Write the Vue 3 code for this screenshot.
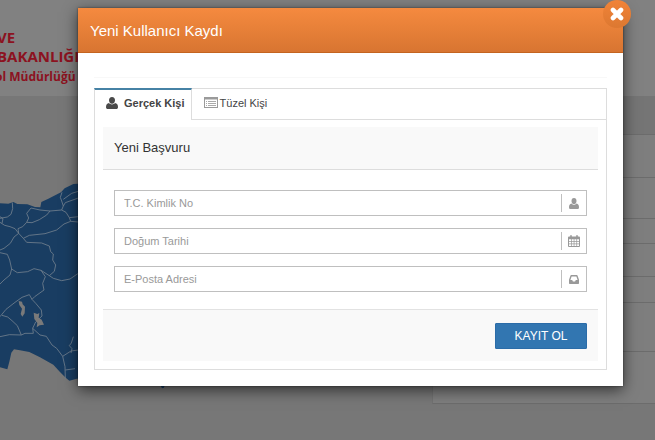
<script setup>
import { ref } from 'vue'

const activeTab = ref('real')
const isOpen = ref(true)
const form = ref({ identity: '', birthDate: '', email: '' })

const fields = [
  { key: 'identity', label: 'T.C. Kimlik No', icon: 'user' },
  { key: 'birthDate', label: 'Doğum Tarihi', icon: 'calendar' },
  { key: 'email', label: 'E-Posta Adresi', icon: 'inbox' },
]

// row heights of the panel behind the dialog
const rows = [43, 41, 25, 33, 26, 49, 53]

function onSubmit() {
  isOpen.value = false
}
</script>

<template>
  <div class="page">
    <header class="page__header">
      <div class="page__name">VE</div>
      <div class="page__name">BAKANLIĞI</div>
      <div class="page__unit">ol Müdürlüğü</div>
    </header>
    <main class="page__main">
      <svg class="map" viewBox="0 0 600 660" aria-hidden="true">
        <path class="map__land" d="M0 100 25 101 40 96 52 102 82 103 105 111 121 112 124 96 145 86 183 67 194 55 220 42 260 40V625L230 626 208 632 198 624 180 606 160 584 120 562 88 546 60 541 42 538 34 548 28 575 22 598 0 592ZM478 640h18l-4 13-6 2Z" />
        <path class="map__border" d="M0 145 22 141 33 133 38 116 37 98M0 157 14 166 30 170 45 176 56 190 42 201 31 220 12 235 0 240M0 140 9 146 6 160M56 190 54 176 68 170 80 157 86 144 80 130 93 114 120 120 150 123 140 135 118 149 96 158 80 157M56 190 70 205 88 196 135 191 170 180 192 162 212 154 235 156M70 205 80 217 125 219 148 228 152 245 160 252 158 270 167 285 163 304 148 317 123 301 102 296 83 305 52 308 35 297 29 270 22 253 0 248M35 297 30 315 12 330 0 342M148 317 160 325 185 332 210 327 235 310M123 301 136 320 128 340 132 360 104 380 96 388 88 374 66 382 45 397 18 418 0 440M96 388 108 401 124 420 126 438 107 456 98 475 100 490 75 490 64 495 28 494 0 500M98 475 120 495 139 499 156 525 170 535 188 559 195 590 196 626M188 559 213 543 235 540M220 500 214 519 208 527 216 536 213 549M196 600 225 596M6 436 23 441 36 452 52 467 64 495M150 123 185 120 190 108 185 93 181 82 186 67M190 88 215 70 235 64M190 108 196 98 235 84M185 120 198 127 208 143 212 154M208 143 235 140" />
        <path class="map__lake" d="M56 393 66 395 68 403 75 410 74 430 67 440 62 432 66 416 58 405ZM101 428 112 432 118 429 116 443 125 449 132 464 119 466 110 472 112 459 103 447Z" />
      </svg>
      <div class="backdrop-panel">
        <div
          v-for="(height, index) in rows"
          :key="index"
          class="backdrop-panel__row"
          :style="{ height: height + 'px' }"
        ></div>
      </div>
    </main>

    <div v-if="isOpen" class="overlay">
      <section class="dialog" role="dialog" aria-labelledby="dialog-title">
        <header class="dialog__header">
          <h1 id="dialog-title" class="dialog__title">Yeni Kullanıcı Kaydı</h1>
          <button type="button" class="dialog__close" aria-label="Kapat" @click="isOpen = false">
            <svg width="14" height="14" viewBox="0 0 14 14">
              <path d="M3 3 11 11M11 3 3 11" stroke="#fff" stroke-width="4.6" stroke-linecap="round" />
            </svg>
          </button>
        </header>

        <div class="dialog__body">
          <div class="tabs">
            <div class="tabs__list" role="tablist">
              <button
                type="button"
                role="tab"
                class="tabs__item"
                :class="{ 'tabs__item--active': activeTab === 'real' }"
                :aria-selected="activeTab === 'real'"
                @click="activeTab = 'real'"
              >
                <svg width="12" height="12" viewBox="0 0 12 12" fill="#4a4a4a">
                  <path d="M6 0C8 0 9 1.400 9 3.300S7.900 6.800 6 6.800 3 5.200 3 3.300 4 0 6 0ZM3 6.100C3.900 7.100 4.900 7.500 6 7.500S8.100 7.100 9 6.100C11 6.400 12 7.800 12 10 12 11.400 11.300 12 10.200 12H1.800C.7 12 0 11.400 0 10 0 7.800 1 6.400 3 6.100Z" />
                </svg>
                Gerçek Kişi
              </button>
              <button
                type="button"
                role="tab"
                class="tabs__item"
                :class="{ 'tabs__item--active': activeTab === 'legal' }"
                :aria-selected="activeTab === 'legal'"
                @click="activeTab = 'legal'"
              >
                <svg width="14" height="11" viewBox="0 0 14 11">
                  <rect x=".5" y=".5" width="13" height="10" fill="#fff" stroke="#9a9a9a" />
                  <path d="M1 1.500H13" stroke="#9a9a9a" stroke-width="2" />
                  <path d="M2 4.500h1M2 6.500h1M2 8.500h1M4 4.500h8M4 6.500h8M4 8.500h8" stroke="#aaa" />
                </svg>
                Tüzel Kişi
              </button>
            </div>

            <form class="form" @submit.prevent="onSubmit">
              <h2 class="form__title">Yeni Başvuru</h2>
              <div class="form__fields">
                <div v-for="field in fields" :key="field.key" class="field">
                  <input
                    v-model="form[field.key]"
                    class="field__input"
                    type="text"
                    :aria-label="field.label"
                    :placeholder="field.label"
                  />
                  <span class="field__icon">
                    <svg v-if="field.icon === 'user'" width="10" height="11" viewBox="0 0 12 12" preserveAspectRatio="none" fill="#999">
                      <path d="M6 0C8 0 9 1.400 9 3.300S7.900 6.800 6 6.800 3 5.200 3 3.300 4 0 6 0ZM3 6.100C3.900 7.100 4.900 7.500 6 7.500S8.100 7.100 9 6.100C11 6.400 12 7.800 12 10 12 11.400 11.300 12 10.200 12H1.800C.7 12 0 11.400 0 10 0 7.800 1 6.400 3 6.100Z" />
                    </svg>
                    <svg v-else-if="field.icon === 'calendar'" width="12" height="12" viewBox="0 0 12 12">
                      <path fill="#999" fill-rule="evenodd" d="M1 1.500H2.200V.7Q2.200 0 3 0T3.800.7V1.500H8.200V.7Q8.200 0 9 0T9.800.7V1.500H11Q12 1.500 12 2.500V11Q12 12 11 12H1Q0 12 0 11V2.500Q0 1.500 1 1.500ZM1 4.200V6H3V4.200ZM3.700 4.200V6H5.700V4.200ZM6.400 4.200V6H8.400V4.200ZM9.100 4.200V6H11V4.200ZM1 6.700V8.500H3V6.700ZM3.700 6.700V8.500H5.700V6.700ZM6.400 6.700V8.500H8.400V6.700ZM9.100 6.700V8.500H11V6.700ZM1 9.200V11H3V9.200ZM3.700 9.200V11H5.700V9.200ZM6.400 9.200V11H8.400V9.200ZM9.100 9.200V11H11V9.200Z" />
                    </svg>
                    <svg v-else width="10" height="9" viewBox="0 0 10 9">
                      <path fill="#999" fill-rule="evenodd" d="M2.200 0H7.800Q8.300 0 8.500.5L10 4.800V8.300Q10 9 9.300 9H.7Q0 9 0 8.300V4.800L1.500.5Q1.700 0 2.200 0ZM2.600 1.400 1.400 5H3.200L3.900 6.500H6.100L6.800 5H8.600L7.400 1.400Z" />
                    </svg>
                  </span>
                </div>
              </div>
              <footer class="form__footer">
                <button type="submit" class="form__submit">KAYIT OL</button>
              </footer>
            </form>
          </div>
        </div>
      </section>
    </div>
  </div>
</template>

<style>
body {
  margin: 0;
  background: #777777;
}
</style>

<style scoped>
.page {
  position: relative;
  min-height: 100vh;
  display: flex;
  flex-direction: column;
  overflow: hidden;
  background: #777777;
  font-family: "Liberation Sans", Arial, sans-serif;
}

.page * {
  box-sizing: border-box;
}

.page__header {
  height: 96px;
  padding-top: 28px;
  background: #818181;
  color: #8c1220;
  font-family: "Open Sans", "Noto Sans", sans-serif;
  font-weight: 700;
  white-space: nowrap;
}

.page__name {
  margin-left: -3px;
  font-size: 15px;
  line-height: 19px;
}

.page__unit {
  margin-left: -5px;
  font-size: 12px;
  line-height: 22px;
}

.page__main {
  flex: 1;
  display: flex;
  justify-content: space-between;
  align-items: flex-start;
}

.map {
  width: 200px;
  height: 220px;
  margin-top: 74px;
}

.map__land {
  fill: #193d62;
}

.map__border {
  fill: none;
  stroke: #71808e;
  stroke-width: 2.5;
  stroke-linejoin: round;
}

.map__lake {
  fill: #7a7a7a;
}

.backdrop-panel {
  width: 34%;
  padding-top: 38px;
  background: #757575;
}

.backdrop-panel__row {
  border-top: 1px solid #6c6c6c;
  border-left: 1px solid #727272;
  background: #7e7e7e;
}

.backdrop-panel__row:last-child {
  border-bottom: 1px solid #6c6c6c;
}

.overlay {
  position: absolute;
  inset: 0;
  padding: 8px 32px 32px 78px;
}

.dialog {
  background: #ffffff;
  box-shadow: 0 4px 14px rgba(0, 0, 0, 0.6), 0 0 2px rgba(0, 0, 0, 0.5);
}

.dialog__header {
  position: relative;
  height: 45px;
  padding: 0 12px;
  display: flex;
  align-items: center;
  border-bottom: 1px solid #c4641f;
  background: linear-gradient(#f58a3f, #d87531);
}

.dialog__title {
  margin: 0;
  color: #ffffff;
  font-size: 15px;
  font-weight: 400;
}

.dialog__close {
  position: absolute;
  top: -8px;
  right: -8px;
  width: 28px;
  height: 28px;
  padding: 0;
  display: flex;
  align-items: center;
  justify-content: center;
  border: 0;
  border-radius: 50%;
  background: linear-gradient(#f18338, #dc7831);
  cursor: pointer;
}

.dialog__body {
  padding: 24px 16px 16px;
}

.dialog__body::before {
  content: "";
  display: block;
  height: 10px;
  border-top: 1px solid #f8f8f8;
}

.tabs {
  border: 1px solid #dddddd;
}

.tabs__list {
  display: flex;
  height: 32px;
  margin: -1px 0 0 -1px;
  border-bottom: 1px solid #dddddd;
}

.tabs__item {
  height: 31px;
  padding: 0 12px 4px;
  display: flex;
  align-items: center;
  gap: 2px;
  border: 0;
  border-top: 2px solid transparent;
  background: transparent;
  color: #444444;
  font-family: inherit;
  font-size: 11px;
  cursor: pointer;
}

.tabs__item--active {
  height: 32px;
  padding: 0 6px 4px 11px;
  gap: 6px;
  border-top-color: #4682a5;
  border-left: 1px solid #dddddd;
  border-right: 1px solid #dddddd;
  background: #ffffff;
  font-weight: 700;
}

.form {
  margin: 7px 8px 8px;
}

.form__title {
  height: 43px;
  margin: 0;
  padding: 0 11px 2px;
  display: flex;
  align-items: center;
  border-bottom: 1px solid #dddddd;
  background: #f9f9f9;
  color: #333333;
  font-size: 13px;
  font-weight: 400;
}

.form__fields {
  padding: 20px 11px 17px;
  display: flex;
  flex-direction: column;
  gap: 12px;
}

.field {
  height: 26px;
  display: flex;
  align-items: center;
  border: 1px solid #bfbfbf;
  background: #ffffff;
}

.field__input {
  flex: 1;
  min-width: 0;
  height: 24px;
  padding: 0 9px;
  border: 0;
  outline: 0;
  background: transparent;
  color: #444444;
  font-family: inherit;
  font-size: 11px;
}

.field__input::placeholder {
  color: #999999;
  opacity: 1;
}

.field__icon {
  width: 25px;
  height: 18px;
  display: flex;
  align-items: center;
  justify-content: center;
  border-left: 1px solid #bfbfbf;
}

.form__footer {
  padding: 13px 11px 12px;
  display: flex;
  justify-content: flex-end;
  border-top: 1px solid #e2e2e2;
  background: #f9f9f9;
}

.form__submit {
  width: 92px;
  height: 26px;
  padding: 0;
  border: 1px solid #2b6ca8;
  border-radius: 1px;
  background: #3276b1;
  color: #ffffff;
  font-family: inherit;
  font-size: 12px;
  cursor: pointer;
}
</style>
